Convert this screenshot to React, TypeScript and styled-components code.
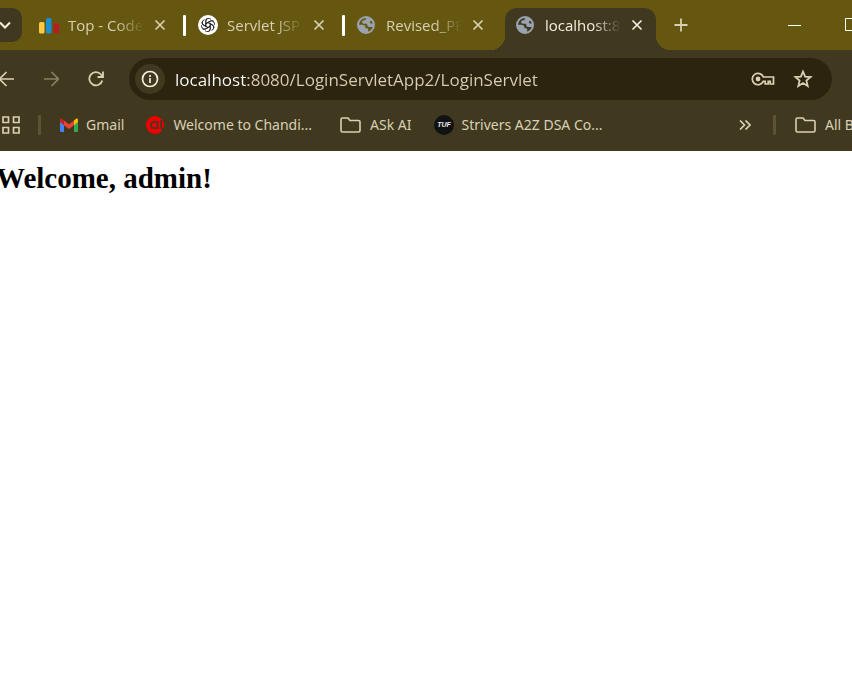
import React from "react";
import styled, { createGlobalStyle, css } from "styled-components";

const ui = `"Open Sans", "Noto Sans", sans-serif`;
const c = {
  frame: "#65570f",
  bar: "#403920",
  field: "#2d240f",
  text: "#d9d0b4",
  bright: "#f4eedd",
  dim: "#8a8163",
};

const GlobalStyle = createGlobalStyle`
  * { box-sizing: border-box; }
  html, body, #root { height: 100%; }
  body { margin: 0; background: #fff; overflow: hidden; }
  button { border: 0; padding: 0; background: none; color: inherit; font: inherit; cursor: pointer; }
  svg { display: block; flex: none; }
`;

const Window = styled.div`
  display: flex;
  flex-direction: column;
  min-height: 100%;
  overflow: hidden;
  font-family: ${ui};
  color: ${c.text};
`;

const TabStrip = styled.header`
  display: flex;
  align-items: center;
  height: 50px;
  background: ${c.frame};
  overflow: hidden;
`;

const TabSearch = styled.button`
  display: flex;
  align-items: center;
  justify-content: center;
  flex: none;
  width: 34px;
  height: 34px;
  margin-left: -12px;
  margin-right: 6px;
  border-radius: 10px;
  background: ${c.bar};
  color: ${c.bright};
`;

const TabList = styled.div`
  display: flex;
  align-items: center;
  flex: none;
  height: 100%;
`;

const flare = css`
  content: "";
  position: absolute;
  bottom: 0;
  width: 14px;
  height: 14px;
`;

const Tab = styled.div<{ $active?: boolean }>`
  position: relative;
  display: flex;
  align-items: center;
  width: 151px;
  height: 42px;
  margin-top: 8px;
  padding: 0 9px 8px 11px;
  border-radius: 12px 12px 0 0;
  color: ${(p) => (p.$active ? c.bright : c.text)};
  ${(p) =>
    p.$active &&
    css`
      background: ${c.bar};
      &::before {
        ${flare}
        left: -14px;
        background: radial-gradient(circle at 0 0, transparent 14px, ${c.bar} 14px);
      }
      &::after {
        ${flare}
        right: -14px;
        background: radial-gradient(circle at 100% 0, transparent 14px, ${c.bar} 14px);
      }
    `}
`;

const TabTitle = styled.button`
  flex: 1;
  min-width: 0;
  margin-left: 9px;
  white-space: nowrap;
  text-align: left;
  font-size: 15px;
  line-height: 20px;
  mask-image: linear-gradient(90deg, #000 48px, transparent 76px);
`;

const IconButton = styled.button<{ $size?: number; $tone?: string }>`
  display: flex;
  align-items: center;
  justify-content: center;
  flex: none;
  width: ${(p) => p.$size ?? 32}px;
  height: ${(p) => p.$size ?? 32}px;
  color: ${(p) => p.$tone ?? c.text};
`;

const TabDivider = styled.span<{ $hidden?: boolean }>`
  width: 3px;
  height: 21px;
  margin: 0 1px 0 4px;
  border-radius: 1px;
  background: ${(p) => (p.$hidden ? "transparent" : "#fff")};
`;

const WindowControls = styled.div`
  display: flex;
  flex: none;
  gap: 24px;
  margin-left: auto;
  margin-right: -15px;
`;

const Toolbar = styled.div`
  display: flex;
  align-items: center;
  height: 58px;
  padding: 8px 20px 8px 0;
  background: ${c.bar};
`;

const NavButtons = styled.nav`
  display: flex;
  flex: none;
  gap: 13px;
  margin-left: -10px;
  margin-right: 17px;
`;

const AddressBar = styled.form`
  display: flex;
  align-items: center;
  flex: 1;
  min-width: 0;
  height: 42px;
  padding: 0 13px 0 6px;
  border-radius: 21px;
  background: ${c.field};
`;

const SiteInfo = styled(IconButton)`
  border-radius: 50%;
  background: ${c.bar};
`;

const AddressActions = styled.div`
  display: flex;
  align-items: center;
  flex: none;
  gap: 4px;
`;

const Address = styled.input`
  flex: 1;
  min-width: 0;
  height: 30px;
  margin-left: 10px;
  padding: 0;
  border: 0;
  outline: 0;
  background: linear-gradient(90deg, #fff 73px, ${c.text} 73px);
  background-clip: text;
  color: transparent;
  font-family: ${ui};
  font-size: 17px;
`;

const BookmarkBar = styled.nav`
  display: flex;
  align-items: center;
  height: 43px;
  padding-bottom: 9px;
  background: ${c.bar};
  overflow: hidden;
  white-space: nowrap;
`;

const AppsButton = styled(IconButton)`
  margin-left: 1px;
`;

const BarDivider = styled.span`
  flex: none;
  width: 3px;
  height: 20px;
  margin: 0 19px 0 18px;
  border-radius: 1px;
  background: #5c5234;
`;

const Bookmark = styled.a<{ $gap: number; $after?: number }>`
  display: flex;
  align-items: center;
  flex: none;
  gap: ${(p) => p.$gap}px;
  margin-right: ${(p) => p.$after ?? 0}px;
  color: ${c.text};
  font-family: "Noto Sans", "Open Sans", sans-serif;
  font-size: 14px;
  line-height: 20px;
  text-decoration: none;
`;

const BarEnd = styled.div`
  display: flex;
  align-items: center;
  flex: none;
  width: 117px;
  margin-left: auto;
`;

const Page = styled.main`
  flex: 1;
  background: #fff;
  color: #000;
`;

const Heading = styled.h1`
  margin: 10px 0 0 -4px;
  font: bold 29px/34px "Liberation Serif", "Times New Roman", serif;
`;

type StrokeProps = { w: number; h?: number; d: string; sw?: number };
const Stroke = ({ w, h = w, d, sw = 2 }: StrokeProps) => (
  <svg width={w} height={h} viewBox={`0 0 ${w} ${h}`} fill="none" stroke="currentColor" strokeWidth={sw} aria-hidden="true">
    <path d={d} />
  </svg>
);

const Close = () => <Stroke w={12} d="M1.5 1.5l9 9M10.5 1.5l-9 9" sw={1.7} />;

const Bars = () => (
  <svg width="20" height="20" viewBox="0 0 20 20" aria-hidden="true">
    <rect x="0" y="7" width="5.5" height="11.5" rx="1.5" fill="#fcc944" />
    <rect x="7" y="3" width="5.5" height="15.5" rx="1.5" fill="#1b8fd2" />
    <rect x="14.5" y="8.5" width="5.5" height="10" rx="1.5" fill="#b81d22" />
  </svg>
);

const Knot = () => (
  <svg width="20" height="20" viewBox="0 0 20 20" aria-hidden="true">
    <circle cx="10" cy="10" r="10" fill="#fff" />
    <g fill="none" stroke="#222" strokeWidth="0.9">
      {[0, 60, 120, 180, 240, 300].map((a) => (
        <path key={a} transform={`rotate(${a} 10 10)`} d="M7.8 11.3V6.4a3 3 0 0 1 5.2-2M7.8 8.7l4.6-2.7a3 3 0 0 1 3.2.2" />
      ))}
    </g>
  </svg>
);

const Globe = () => (
  <svg width="20" height="20" viewBox="1 0 20 20" fill="none" aria-hidden="true">
    <circle cx="10" cy="10" r="8" stroke="#9aa3ad" strokeWidth="2" />
    <path
      fill="#9aa3ad"
      d="M11.5 2c-1.8.8-2 2-2 3.2H8c-1.2 0-1.900.8-1.900 1.800S6.900 8.700 8 8.700h2.300c.7 0 1 .4 1 1v.6c0 1.100.8 1.700 2 1.700h4.500V8.500h-2.600c-.9 0-1.300-.5-1.300-1.200 0-.8.5-1.300 1.300-1.300h1.600C15.700 3.800 13.800 2.300 11.500 2zM2 9.800h4.200c2 0 3.300 1 3.300 2.700v.8h1.200c1 0 1.500.6 1.500 1.400v3c-4.200 1.200-9.500-1.200-10.200-7.900z"
    />
  </svg>
);

const Mail = () => (
  <svg width="18" height="14" viewBox="0 0 18 14" aria-hidden="true">
    <path d="M0 3h4v11H1.200A1.200 1.200 0 0 1 0 12.800z" fill="#4285f4" />
    <path d="M14 3h4v9.800a1.200 1.200 0 0 1-1.200 1.200H14z" fill="#34a853" />
    <path d="M14 2.500L16 .7c1-.7 2 0 2 1V4l-4 3.200z" fill="#fbbc04" />
    <path d="M4 2.500L9 6.300l5-3.800v4.700L9 11 4 7.200z" fill="#ea4335" />
    <path d="M0 1.700C0 .7 1 0 2 .7l2 1.800v4.700L0 4z" fill="#c5221f" />
  </svg>
);

const AtMark = () => (
  <svg width="18" height="20" viewBox="0 0 18 20" aria-hidden="true">
    <circle cx="9" cy="10" r="9" fill="#f00000" />
    <path d="M11.5 6.800H8.200a3.200 3.200 0 0 0 0 6.400h3.300M11.600 5.900v8.200M15.200 5v8q0 1.200 2.800 1.200" fill="none" stroke={c.bar} strokeWidth="1.700" />
  </svg>
);

const Folder = () => <Stroke w={21} h={16} d="M1 2.5Q1 1 2.5 1H8l2 2.500h8.500Q20 3.500 20 5v8.500q0 1.500-1.500 1.500h-16Q1 15 1 13.500z" sw={1.6} />;

const Tuf = () => (
  <svg width="20" height="20" viewBox="0 0 20 20" aria-hidden="true">
    <circle cx="10" cy="10" r="10" fill="#111214" />
    <text x="10" y="12" textAnchor="middle" fill="#eee" fontFamily="Liberation Sans, sans-serif" fontSize="7" fontWeight="bold" fontStyle="italic">
      TUF
    </text>
  </svg>
);

const tabs = [
  { title: "Top - Code", icon: <Bars /> },
  { title: "Servlet JSP", icon: <Knot /> },
  { title: "Revised_PE", icon: <Globe /> },
  { title: "localhost:8", icon: <Globe />, active: true },
];

export default function App() {
  return (
    <Window>
      <GlobalStyle />
      <TabStrip>
        <TabSearch aria-label="Search tabs">
          <Stroke w={12} h={8} d="M1 1.500l5 5 5-5" />
        </TabSearch>
        <TabList>
          {tabs.map((t, i) => (
            <React.Fragment key={t.title}>
              {i > 0 && <TabDivider $hidden={t.active} />}
              <Tab $active={t.active}>
                {t.icon}
                <TabTitle>{t.title}</TabTitle>
                <IconButton $size={20} $tone="inherit" aria-label={`Close ${t.title}`}>
                  <Close />
                </IconButton>
              </Tab>
            </React.Fragment>
          ))}
        </TabList>
        <IconButton $size={50} aria-label="New tab">
          <Stroke w={14} d="M7 .5v13M.5 7h13" sw={1.8} />
        </IconButton>
        <WindowControls>
          <IconButton $tone="#fff" aria-label="Minimize">
            <Stroke w={14} h={1} d="M0 .5h13" sw={1} />
          </IconButton>
          <IconButton $tone="#fff" aria-label="Maximize">
            <Stroke w={14} d="M1.500 .5h11v12h-11z" sw={1} />
          </IconButton>
        </WindowControls>
      </TabStrip>
      <Toolbar>
        <NavButtons aria-label="History">
          <IconButton aria-label="Back">
            <Stroke w={16} d="M16 8H2M8.500 1L1.500 8l7 7" sw={1.7} />
          </IconButton>
          <IconButton $tone={c.dim} aria-label="Forward">
            <Stroke w={16} d="M1 8h14M8.500 1l7 7-7 7" sw={1.7} />
          </IconButton>
          <IconButton aria-label="Reload">
            <Stroke w={16} d="M14.300 9.500A6.600 6.600 0 1 1 13 3.500l1.500 2M15 .5v5.500H9.500" sw={1.8} />
          </IconButton>
        </NavButtons>
        <AddressBar onSubmit={(e) => e.preventDefault()}>
          <SiteInfo $size={30} $tone={c.bright} type="button" aria-label="Site information">
            <svg width="18" height="18" viewBox="0 0 18 18" fill="none" stroke="currentColor" strokeWidth="1.7" aria-hidden="true">
              <circle cx="9" cy="9" r="7.5" />
              <path d="M9 8v5M9 5v2" />
            </svg>
          </SiteInfo>
          <Address aria-label="Address" defaultValue="localhost:8080/LoginServletApp2/LoginServlet" spellCheck={false} />
          <AddressActions>
            <IconButton $size={40} type="button" aria-label="Passwords">
              <svg width="24" height="14" viewBox="0 0 24 14" fill="none" stroke="currentColor" strokeWidth="1.7" aria-hidden="true">
                <path d="M12.300 5H22.500v7h-3.300V9.300h-2V12h-3V9.300h-2A5.700 5.700 0 1 1 12.300 5z" />
                <circle cx="7" cy="7" r="2.4" fill="currentColor" stroke="none" />
              </svg>
            </IconButton>
            <IconButton type="button" aria-label="Bookmark this page">
              <Stroke w={20} d="M10 2.500l2.100 5.100 5.500.4-4.200 3.600 1.300 5.400L10 14.100 5.300 17l1.300-5.400L2.400 8l5.500-.4z" sw={1.8} />
            </IconButton>
          </AddressActions>
        </AddressBar>
      </Toolbar>
      <BookmarkBar aria-label="Bookmarks">
        <AppsButton $size={19} aria-label="Apps">
          <Stroke w={18} d="M1 1h5.500v5.500H1zM11.500 1H17v5.500h-5.500zM1 11.500h5.500V17H1zM11.500 11.500H17V17h-5.500z" sw={1.7} />
        </AppsButton>
        <BarDivider />
        <Bookmark href="#gmail" $gap={8} $after={22}>
          <Mail />
          Gmail
        </Bookmark>
        <Bookmark href="#chandigarh" $gap={9} $after={28}>
          <AtMark />
          Welcome to Chandi...
        </Bookmark>
        <Bookmark href="#ask-ai" $gap={9} $after={22}>
          <Folder />
          ASk AI
        </Bookmark>
        <Bookmark href="#strivers" $gap={8}>
          <Tuf />
          Strivers A2Z DSA Co...
        </Bookmark>
        <BarEnd>
          <IconButton $size={20} aria-label="More bookmarks">
            <Stroke w={12} h={10} d="M1 .5L5.500 5 1 9.500M6.500 .5L11 5l-4.500 4.500" sw={1.7} />
          </IconButton>
          <BarDivider />
          <Bookmark href="#all" $gap={9}>
            <Folder />
            All Bookmarks
          </Bookmark>
        </BarEnd>
      </BookmarkBar>
      <Page>
        <Heading>Welcome, admin!</Heading>
      </Page>
    </Window>
  );
}
